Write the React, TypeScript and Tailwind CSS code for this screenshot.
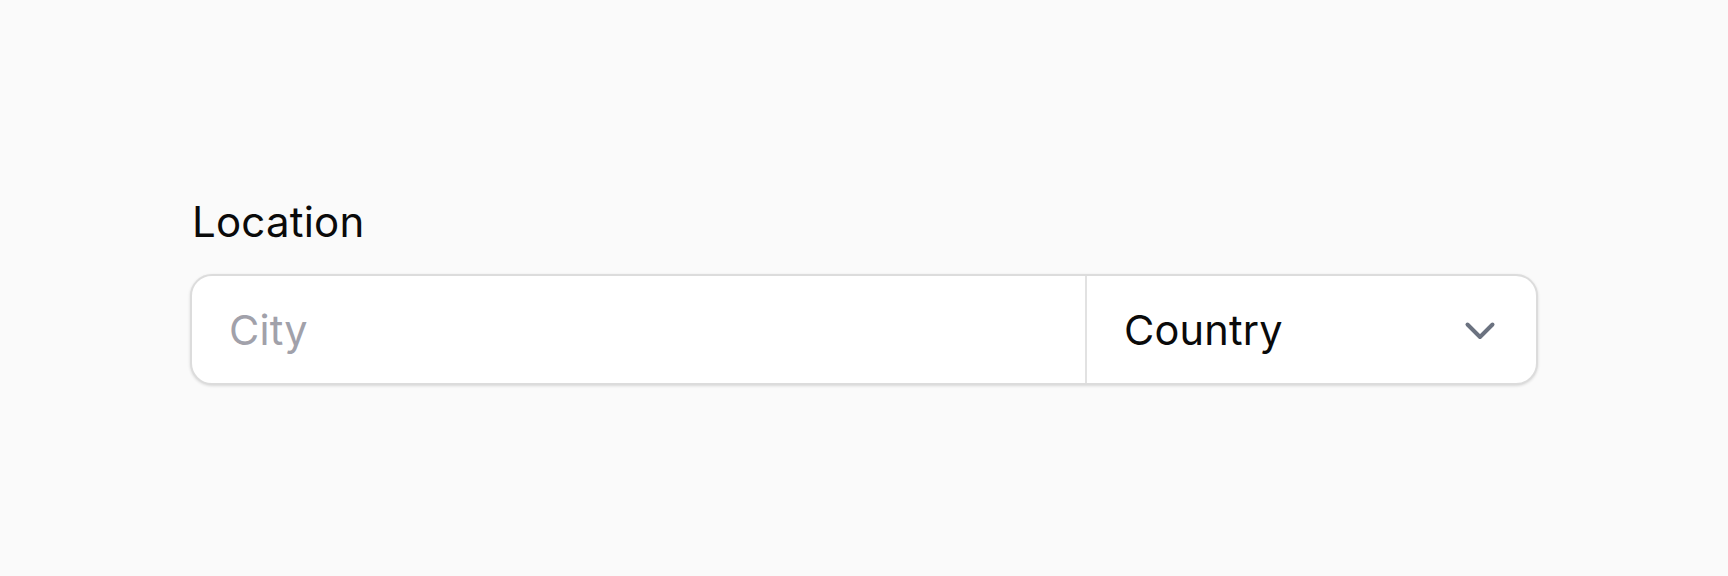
import React from "react";

export default function App() {
  return (
    <div
      className="min-h-[576px] w-full bg-[#fafafa] px-[190px] pt-[197px]"
      style={{ fontFamily: "Inter, 'Noto Sans', sans-serif" }}
    >
      <label className="ml-[2px] block text-[42px] leading-[50px] tracking-[0.2px] text-[#0a0a0a]">Location</label>
      <div className="mt-[27px] flex h-[111px] w-full overflow-hidden rounded-[22px] border-2 border-[#dcdcdc] bg-white shadow-[0_1px_3px_rgba(0,0,0,0.14)]">
        <div className="flex flex-1 items-center pl-[37px]">
          <span className="text-[41.5px] leading-[50px] tracking-[0.2px] text-[#a1a1aa]">City</span>
        </div>
        <div className="flex w-[451px] items-center justify-between border-l-2 border-[#e2e2e2] pl-[37px] pr-[40px]">
          <span className="text-[41.5px] leading-[50px] tracking-[0.2px] text-[#0a0a0a]">Country</span>
          <svg width="32" height="20" viewBox="0 0 32 20" fill="none" className="mt-[2px]">
            <path d="M3.5 3.5 L16 16 L28.5 3.5" stroke="#6b7280" strokeWidth="4" strokeLinecap="round" strokeLinejoin="round" />
          </svg>
        </div>
      </div>
    </div>
  );
}
